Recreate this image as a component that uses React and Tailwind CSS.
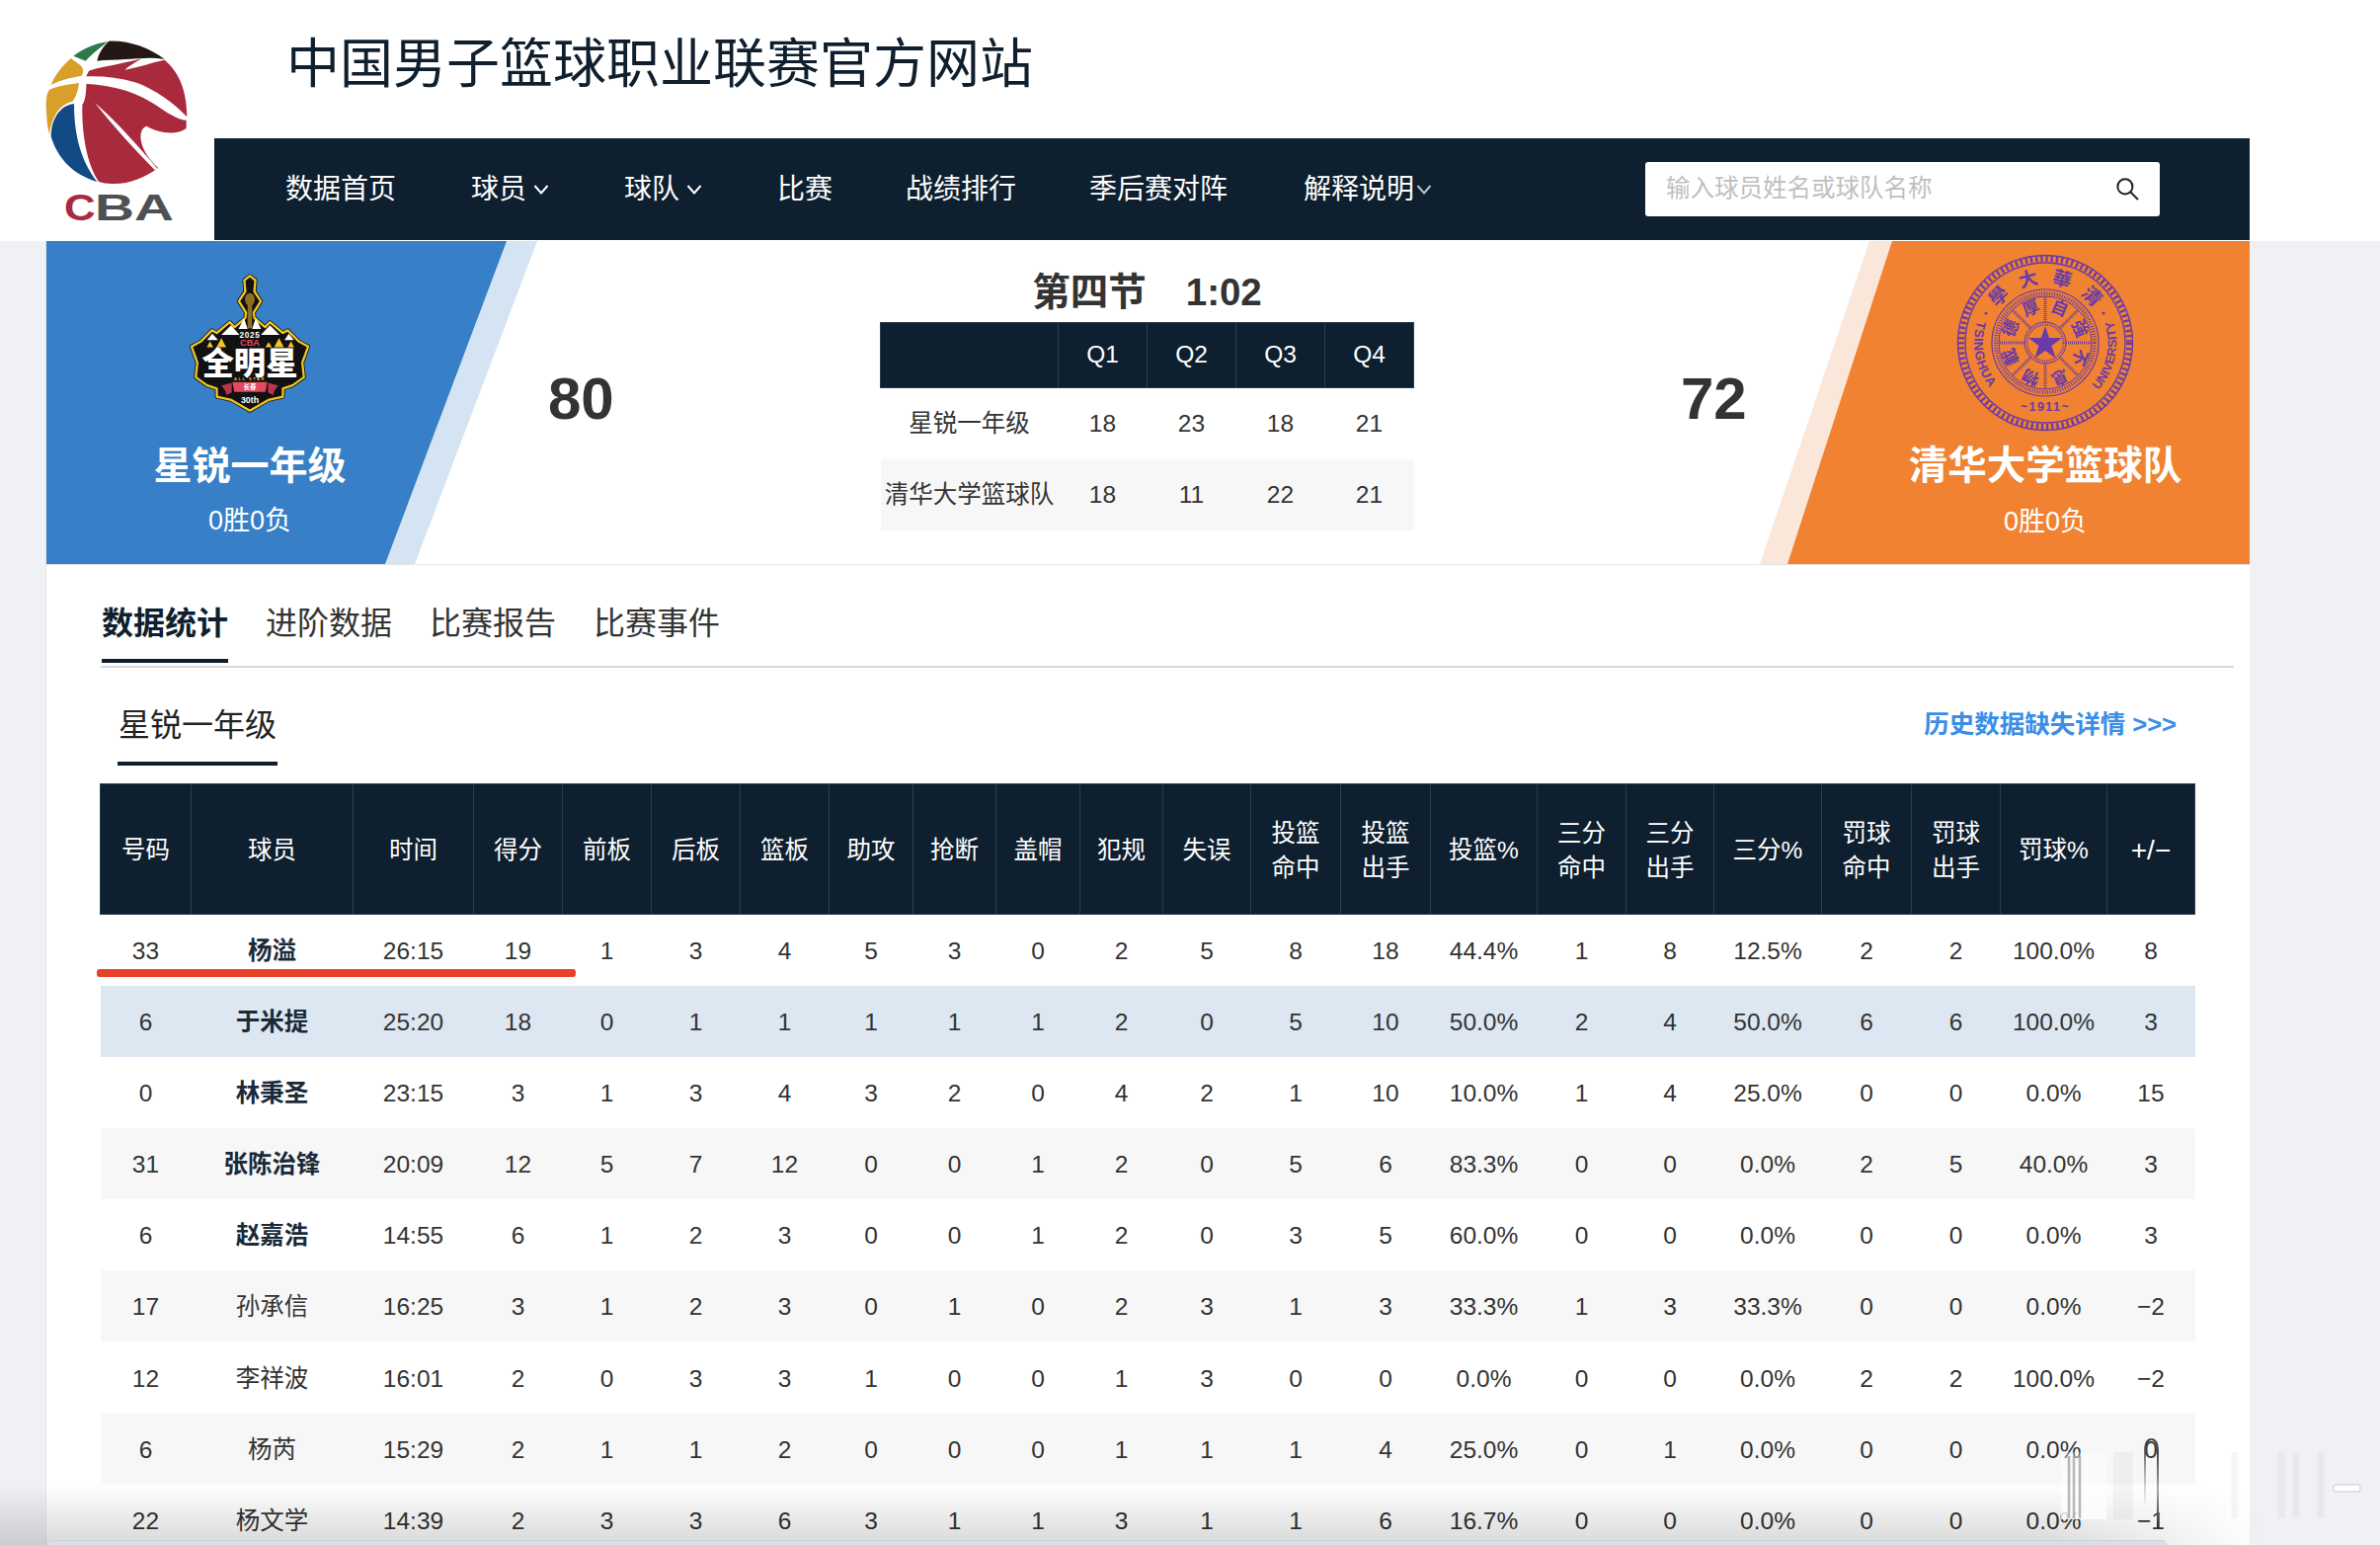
const NAV = [
  { label: '数据首页', cls: 'mr-[2px]' },
  { label: '球员', caret: true },
  { label: '球队', caret: true },
  { label: '比赛' },
  { label: '战绩排行' },
  { label: '季后赛对阵' },
  { label: '解释说明', caret: true, dim: true, cls: 'ml-[3px]' },
];

const COLS = [
  { label: ['号码'], w: 'w-[92px]' },
  { label: ['球员'], w: 'w-[164px]' },
  { label: ['时间'], w: 'w-[122px]' },
  { label: ['得分'], w: 'w-[90px]' },
  { label: ['前板'], w: 'w-[90px]' },
  { label: ['后板'], w: 'w-[90px]' },
  { label: ['篮板'], w: 'w-[90px]' },
  { label: ['助攻'], w: 'w-[85px]' },
  { label: ['抢断'], w: 'w-[84px]' },
  { label: ['盖帽'], w: 'w-[85px]' },
  { label: ['犯规'], w: 'w-[84px]' },
  { label: ['失误'], w: 'w-[89px]' },
  { label: ['投篮', '命中'], w: 'w-[91px]' },
  { label: ['投篮', '出手'], w: 'w-[91px]' },
  { label: ['投篮%'], w: 'w-[108px]' },
  { label: ['三分', '命中'], w: 'w-[90px]' },
  { label: ['三分', '出手'], w: 'w-[89px]' },
  { label: ['三分%'], w: 'w-[109px]' },
  { label: ['罚球', '命中'], w: 'w-[91px]' },
  { label: ['罚球', '出手'], w: 'w-[90px]' },
  { label: ['罚球%'], w: 'w-[108px]' },
  { label: ['+/−'], w: 'w-[89px] text-[28px]' },
];

const ROWS = [
  ['33', '杨溢', '26:15', 19, 1, 3, 4, 5, 3, 0, 2, 5, 8, 18, '44.4%', 1, 8, '12.5%', 2, 2, '100.0%', 8],
  ['6', '于米提', '25:20', 18, 0, 1, 1, 1, 1, 1, 2, 0, 5, 10, '50.0%', 2, 4, '50.0%', 6, 6, '100.0%', 3],
  ['0', '林秉圣', '23:15', 3, 1, 3, 4, 3, 2, 0, 4, 2, 1, 10, '10.0%', 1, 4, '25.0%', 0, 0, '0.0%', 15],
  ['31', '张陈治锋', '20:09', 12, 5, 7, 12, 0, 0, 1, 2, 0, 5, 6, '83.3%', 0, 0, '0.0%', 2, 5, '40.0%', 3],
  ['6', '赵嘉浩', '14:55', 6, 1, 2, 3, 0, 0, 1, 2, 0, 3, 5, '60.0%', 0, 0, '0.0%', 0, 0, '0.0%', 3],
  ['17', '孙承信', '16:25', 3, 1, 2, 3, 0, 1, 0, 2, 3, 1, 3, '33.3%', 1, 3, '33.3%', 0, 0, '0.0%', '−2'],
  ['12', '李祥波', '16:01', 2, 0, 3, 3, 1, 0, 0, 1, 3, 0, 0, '0.0%', 0, 0, '0.0%', 2, 2, '100.0%', '−2'],
  ['6', '杨芮', '15:29', 2, 1, 1, 2, 0, 0, 0, 1, 1, 1, 4, '25.0%', 0, 1, '0.0%', 0, 0, '0.0%', 0],
  ['22', '杨文学', '14:39', 2, 3, 3, 6, 3, 1, 1, 3, 1, 1, 6, '16.7%', 0, 0, '0.0%', 0, 0, '0.0%', '−1'],
];

const ROW_BG = ['bg-white', 'bg-[#dce7f1]', 'bg-white', 'bg-[#f7f7f7]', 'bg-white', 'bg-[#f7f7f7]', 'bg-white', 'bg-[#f7f7f7]', 'bg-white'];

export default function App() {
  return (
    <div className="relative h-[1564px] w-[2410px] overflow-hidden bg-[#eff1f5] font-['Liberation_Sans','Noto_Sans_CJK_SC',sans-serif] text-[#333]">
      <header className="flex h-[244px] bg-white">
        <div className="w-[217px] shrink-0 pl-[30px] pt-[30px]">
          <CbaLogo />
        </div>
        <div className="flex-1">
          <div className="flex h-[140px] items-center pb-[11px] pl-[73px]">
            <h1 className="text-[54px] font-normal leading-none text-[#0f1f2e]">中国男子篮球职业联赛官方网站</h1>
          </div>
          <nav className="flex h-[103px] w-[2061px] items-center bg-[#0e1f2f] pl-[72px] pr-[91px] text-[28px] text-white">
            <div className="flex gap-[74px]">
              {NAV.map((n) => (
                <span key={n.label} className={`flex items-center ${n.dim ? 'gap-[2px]' : 'gap-[7px]'} ${n.cls || ''}`}>
                  {n.label}
                  {n.caret && <Caret dim={n.dim} />}
                </span>
              ))}
            </div>
            <div className="ml-auto flex h-[55px] w-[521px] items-center justify-between rounded-[3px] bg-white pl-[21px] pr-[21px]">
              <span className="text-[24.5px] text-[#bfbfbf]">输入球员姓名或球队名称</span>
              <svg width="23" height="23" viewBox="0 0 22 22" fill="none" stroke="#222" strokeWidth="1.9">
                <circle cx="8.5" cy="8.5" r="7.2" />
                <path d="M13.8 13.8L21 21" />
              </svg>
            </div>
          </nav>
        </div>
      </header>

      <main className="ml-[46px] h-[1320px] w-[2232px] border-l border-[#e3e5e8] bg-white">
        <section className="flex h-[328px] border-b border-[#e4e4e4] bg-white">
          <div className="h-full w-[497px] shrink-0 bg-[#d4e4f3] [clip-path:polygon(0_0,100%_0,373px_100%,0_100%)]">
            <div className="h-full w-[466px] bg-[#377fc6] pt-[33px] text-white [clip-path:polygon(0_0,100%_0,343px_100%,0_100%)]">
              <div className="flex w-[412px] flex-col items-center">
                <AllStarBadge />
                <div className="mt-[32px] text-[39px] font-bold leading-[44px]">星锐一年级</div>
                <div className="mt-[15px] text-[27px] leading-[36px]">0胜0负</div>
              </div>
            </div>
          </div>

          <div className="flex min-w-0 flex-1 items-center justify-between pl-[11px] pr-[14px]">
            <div className="mb-[7px] w-[66px] text-center text-[60px] font-bold leading-none text-[#333]">80</div>
            <div className="flex h-full flex-col items-center pt-[26px]">
              <div className="flex h-[56px] items-center gap-[40px] pb-[4px] text-[38.5px] font-bold leading-none text-[#333]">
                <span>第四节</span>
                <span>1:02</span>
              </div>
              <QuarterTable />
            </div>
            <div className="mb-[7px] w-[66px] text-center text-[60px] font-bold leading-none text-[#333]">72</div>
          </div>

          <div className="flex h-full w-[496px] shrink-0 justify-end bg-[#fae7da] [clip-path:polygon(111px_0,100%_0,100%_100%,0_100%)]">
            <div className="flex h-full w-[468px] justify-end bg-[#f08232] pt-[13px] text-white [clip-path:polygon(106px_0,100%_0,100%_100%,0_100%)]">
              <div className="flex w-[414px] flex-col items-center">
                <TsinghuaSeal />
                <div className="mt-[12px] text-[39.5px] font-bold leading-[44px]">清华大学篮球队</div>
                <div className="mt-[17px] text-[27px] leading-[36px]">0胜0负</div>
              </div>
            </div>
          </div>
        </section>

        <div className="ml-[55px] mr-[16px] flex gap-[38px] border-b-2 border-[#d9d9d9] pb-[3px] pl-px pt-[37px] text-[32px] leading-[44px] text-[#333]">
          <span className="border-b-4 border-[#0e1f2f] pb-[14px] font-bold text-[#0e1f2f]">数据统计</span>
          <span>进阶数据</span>
          <span>比赛报告</span>
          <span>比赛事件</span>
        </div>

        <div className="ml-[72px] mr-[74px] mt-[36px] flex items-start justify-between">
          <span className="border-b-4 border-[#0e1f2f] pb-[15px] pl-px pr-px text-[32px] leading-[44px] text-[#222]">星锐一年级</span>
          <a className="text-[25.5px] font-bold leading-[42px] text-[#3a8ee6]">历史数据缺失详情 &gt;&gt;&gt;</a>
        </div>

        <table className="ml-[54px] mt-[18px] w-[2121px] table-fixed text-center text-[24.5px]">
          <thead>
            <tr className="h-[132px] bg-[#0e1f2f] text-white">
              {COLS.map((c, i) => (
                <th
                  key={i}
                  className={`${c.w} border border-[#2b3e51] p-0 pt-[2px] font-normal leading-[35px]`}
                >
                  {c.label.map((l) => (
                    <div key={l}>{l}</div>
                  ))}
                </th>
              ))}
            </tr>
          </thead>
          <tbody>
            {ROWS.map((r, i) => (
              <tr key={i} className={`h-[72.17px] ${ROW_BG[i]}`}>
                {r.map((v, j) => (
                  <td key={j} className={j === 1 && i < 5 ? 'p-0 pt-[3px] font-bold text-[#1a2a38]' : 'p-0 pt-[3px]'}>
                    {v}
                  </td>
                ))}
              </tr>
            ))}
          </tbody>
        </table>
      </main>

      {/* red marker someone drew on the screenshot */}
      <div className="absolute left-[98px] top-[981px] h-[8px] w-[485px] rounded-[3px] bg-[#e8432a]" />

      {/* dock reflection along the bottom edge */}
      <div className="absolute inset-x-0 bottom-0 h-[62px] bg-gradient-to-b from-transparent to-black/15 [mask-image:linear-gradient(to_right,black_86%,transparent_95%)]" />
      <div className="absolute bottom-0 left-[48px] h-[5px] w-[2146px] rounded-t-[14px] border-t border-[#c9d2d8] bg-[#d5e0e8]" />
      <DockGhost />
    </div>
  );
}

function Caret({ dim }) {
  return (
    <svg width="18" height="12" viewBox="0 0 18 12" fill="none" className={dim ? 'text-[#b9c2cc]' : 'text-white'} stroke="currentColor" strokeWidth="2">
      <path d="M1.5 2L8 9.5L14.5 2" />
    </svg>
  );
}

function QuarterTable() {
  const rows = [
    ['星锐一年级', 18, 23, 18, 21],
    ['清华大学篮球队', 18, 11, 22, 21],
  ];
  return (
    <table className="w-[540px] table-fixed text-center text-[24.5px]">
      <thead>
        <tr className="h-[66px] bg-[#0e1f2f] text-white">
          {['', 'Q1', 'Q2', 'Q3', 'Q4'].map((q, i) => (
            <th
              key={i}
              className={`${i === 0 ? 'w-[180px]' : 'w-[90px]'} border border-[#2b3e51] p-0 font-normal`}
            >
              {q}
            </th>
          ))}
        </tr>
      </thead>
      <tbody>
        {rows.map((r, i) => (
          <tr key={i} className={`h-[72px] ${i === 1 ? 'bg-[#f7f7f7]' : 'bg-white'}`}>
            {r.map((v, j) => (
              <td key={j} className="whitespace-nowrap p-0 pt-[2px]">
                {v}
              </td>
            ))}
          </tr>
        ))}
      </tbody>
    </table>
  );
}

function CbaLogo() {
  return (
    <svg width="180" height="210" viewBox="0 0 540 630">
      <path fill="#2c7a4b" d="M133 80C162 58 200 42 238 36C220 50 192 72 170 95Z" />
      <path fill="#231815" d="M240 35C300 32 365 55 410 90C370 82 330 88 290 90C260 92 230 92 205 95C210 70 225 50 240 35Z" />
      <path fill="#d99f2b" d="M125 87C100 110 78 135 65 168C95 152 130 145 158 140C168 125 160 112 150 105Z" />
      <path fill="#d99f2b" d="M52 262C48 225 50 195 60 182C90 170 125 165 150 162C148 180 142 205 130 218C100 225 70 250 60 318C55 300 52 280 52 262Z" />
      <path fill="#124a85" d="M135 225C90 230 65 275 65 325C85 390 130 440 205 462C165 410 135 340 135 225Z" />
      <path fill="#a82a3c" d="M180 125C230 110 280 105 340 88C320 100 300 112 290 122C330 115 370 100 410 92C450 125 478 180 478 265C440 225 380 180 320 160C270 145 220 140 172 142Z" />
      <path fill="#a82a3c" d="M172 165C260 170 330 190 400 240C430 260 455 275 476 275L476 300C440 325 385 310 355 293C335 300 330 330 350 370C360 390 375 405 390 420C350 450 300 470 250 468C235 468 222 466 210 462C175 410 158 320 160 228C165 222 172 205 172 165Z" />
      <path fill="#fff" d="M198 222C270 285 335 360 388 422L380 426C320 365 255 295 198 222Z" />
      <text x="105" y="580" textLength="95" lengthAdjust="spacingAndGlyphs" fontFamily="Liberation Sans" fontWeight="700" fontSize="112" fill="#a82a3c">C</text>
      <text x="198" y="580" textLength="240" lengthAdjust="spacingAndGlyphs" fontFamily="Liberation Sans" fontWeight="700" fontSize="112" fill="#4f5054">BA</text>
    </svg>
  );
}

function AllStarBadge() {
  const outline =
    '338,82 355,95 352,130 372,160 350,195 352,212 385,240 400,225 440,258 455,250 490,285 518,300 500,350 505,395 470,420 440,430 440,455 395,465 338,498 281,465 236,455 236,430 206,420 171,395 176,350 158,300 186,285 221,250 236,258 276,225 291,240 324,212 326,195 304,160 324,130 321,95';
  return (
    <svg width="122" height="141" viewBox="152 76 372 428" className="shrink-0">
      <polygon points={outline} fill="#111" stroke="#111" strokeWidth="12" strokeLinejoin="round" />
      <polygon points={outline} fill="#111" stroke="#f2c523" strokeWidth="7" strokeLinejoin="round" />
      <ellipse cx="338" cy="155" rx="15" ry="20" fill="#8d6f22" />
      <rect x="331" y="172" width="14" height="72" fill="#8d6f22" />
      <g fill="#fff">
        <polygon points="250,264 280,234 306,264" />
        <polygon points="372,264 400,234 430,264" />
        <polygon points="206,280 222,260 240,280" />
        <polygon points="445,280 458,260 474,280" />
        <polygon points="303,246 320,212 331,246" />
        <polygon points="345,246 356,212 373,246" />
      </g>
      <g fill="#f2c523">
        <polygon points="215,284 225,302 205,302" />
        <polygon points="250,274 265,302 235,302" />
        <polygon points="396,286 406,302 386,302" />
        <polygon points="428,274 443,302 413,302" />
        <polygon points="465,284 475,302 455,302" />
      </g>
      <text x="338" y="272" textAnchor="middle" fontSize="25" fontWeight="700" fill="#fff" fontFamily="Liberation Sans" letterSpacing="2">2025</text>
      <text x="338" y="298" textAnchor="middle" fontSize="28" fontWeight="700" fill="#e2485f" fontFamily="Liberation Sans">CBA</text>
      <text x="338" y="386" textAnchor="middle" fontSize="96" fontWeight="900" fill="#fff" fontFamily="Noto Sans CJK SC" textLength="296" lengthAdjust="spacingAndGlyphs">全明星</text>
      <text x="338" y="404" textAnchor="middle" fontSize="12" fontWeight="700" fill="#f2c523" fontFamily="Liberation Sans" letterSpacing="5">ALL STAR</text>
      <polygon points="250,420 282,412 282,442 266,450 262,436" fill="#b83450" />
      <polygon points="426,420 394,412 394,442 410,450 414,436" fill="#b83450" />
      <polygon points="284,410 392,410 386,440 290,440" fill="#e2485f" />
      <text x="338" y="433" textAnchor="middle" fontSize="20" fontWeight="700" fill="#fff" fontFamily="Noto Sans CJK SC">长春</text>
      <text x="338" y="474" textAnchor="middle" fontSize="27" fontWeight="700" fill="#fff" fontFamily="Liberation Sans">30th</text>
    </svg>
  );
}

function TsinghuaSeal() {
  const c = '#6a3aa6';
  const top = ['學', '大', '華', '清'];
  const motto = ['厚', '自', '強', '不', '息', '物', '載', '德'];
  const spokes = [0, 45, 90, 135, 180, 225, 270, 315];
  return (
    <svg width="180" height="180" viewBox="0 0 180 180" className="shrink-0">
      <defs>
        <path id="seal-low" d="M21.5 67.75A72 72 0 1 0 158.5 67.75" />
      </defs>
      <g fill="none" stroke={c}>
        <circle cx="90" cy="90" r="88.5" strokeWidth="1.4" />
        <circle cx="90" cy="90" r="85" strokeWidth="6" strokeDasharray="2.2 3" />
        <circle cx="90" cy="90" r="81" strokeWidth="1.4" />
        <circle cx="90" cy="90" r="54" strokeWidth="1.2" />
        <circle cx="90" cy="90" r="50" strokeWidth="4" strokeDasharray="1 1.6" />
        <circle cx="90" cy="90" r="47" strokeWidth="1" />
        <circle cx="90" cy="90" r="21" strokeWidth="1" />
        <circle cx="90" cy="90" r="18.5" strokeWidth="2.5" strokeDasharray="1 1.4" />
        {spokes.map((a) => (
          <line
            key={a}
            x1="90"
            y1="69"
            x2="90"
            y2="43"
            strokeWidth="3"
            strokeDasharray="1 1"
            transform={`rotate(${a} 90 90)`}
          />
        ))}
      </g>
      <polygon
        fill={c}
        points="90,73 94,85 107,85 96.5,93 100.5,105.5 90,98 79.5,105.5 83.5,93 73,85 86,85"
      />
      {motto.map((m, i) => (
        <text
          key={m}
          x="90"
          y="58"
          textAnchor="middle"
          fontSize="17"
          fontWeight="700"
          fill={c}
          fontFamily="Noto Sans CJK TC"
          transform={`rotate(${-22.5 + i * 45} 90 90)`}
        >
          {m}
        </text>
      ))}
      {top.map((m, i) => (
        <text
          key={m}
          x="90"
          y="30"
          textAnchor="middle"
          fontSize="19"
          fontWeight="700"
          fill={c}
          fontFamily="Noto Sans CJK TC"
          transform={`rotate(${-45 + i * 30} 90 90)`}
        >
          {m}
        </text>
      ))}
      <text fontSize="13" fontWeight="700" fill={c} fontFamily="Liberation Sans" letterSpacing="0.5">
        <textPath href="#seal-low" startOffset="0%">TSINGHUA</textPath>
      </text>
      <text fontSize="12.5" fontWeight="700" fill={c} fontFamily="Liberation Sans">
        <textPath href="#seal-low" startOffset="100%" textAnchor="end">UNIVERSITY</textPath>
      </text>
      <text x="90" y="159" textAnchor="middle" fontSize="12.5" fill={c} fontFamily="Liberation Sans" letterSpacing="1.5" fontWeight="700">~1911~</text>
      <circle cx="30" cy="60" r="1.5" fill={c} />
      <circle cx="149" cy="60" r="1.5" fill={c} />
    </svg>
  );
}

// blurred dock glyphs that sit over the lower right corner of the screenshot
function DockGhost() {
  return (
    <svg className="absolute left-[2080px] top-[1450px]" width="330" height="114" viewBox="0 0 330 114" fill="none">
      <defs>
        <linearGradient id="ghost-fade" x1="0" y1="0" x2="0" y2="1">
          <stop offset="0" stopColor="#fff" stopOpacity="0.3" />
          <stop offset="1" stopColor="#fff" stopOpacity="0.85" />
        </linearGradient>
        <linearGradient id="ghost-left" gradientUnits="userSpaceOnUse" x1="0" y1="7" x2="0" y2="72">
          <stop offset="0" stopColor="#333" />
          <stop offset="1" stopColor="#bbb" stopOpacity="0.2" />
        </linearGradient>
        <linearGradient id="ghost-right" gradientUnits="userSpaceOnUse" x1="0" y1="20" x2="0" y2="97">
          <stop offset="0" stopColor="#444" />
          <stop offset="0.5" stopColor="#aaa" />
          <stop offset="1" stopColor="#222" />
        </linearGradient>
      </defs>
      <rect x="7" y="20" width="46" height="68" fill="url(#ghost-fade)" />
      <rect x="60" y="20" width="20" height="68" fill="#000" opacity="0.035" />
      <path d="M15 87V24M20 87V24M26 87V24" stroke="#999" strokeWidth="2.5" opacity="0.7" />
      <path d="M92 72V20Q92 7 98.5 7" stroke="url(#ghost-left)" strokeWidth="2" />
      <path d="M98.5 7Q105 7 105 20V97" stroke="url(#ghost-right)" strokeWidth="2" />
      <g stroke="#000" opacity="0.03" strokeWidth="7">
        <path d="M183 20V87M230 20V87M245 20V87M270 20V87" />
      </g>
      <rect x="283" y="53" width="27" height="7" rx="2" fill="#fff" stroke="#c8c8c8" />
    </svg>
  );
}
